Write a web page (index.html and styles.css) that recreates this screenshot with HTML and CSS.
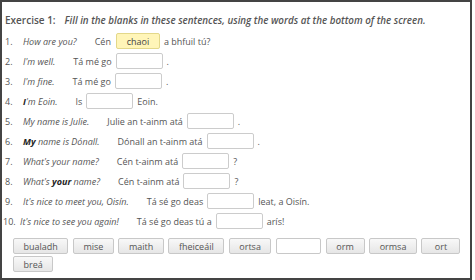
FILE: index.html
```html
<!DOCTYPE html>
<html>
<head>
<meta charset="utf-8">
<link rel="stylesheet" href="styles.css">
</head>
<body>
<div class="frame">
  <div class="title"><span class="label">Exercise 1:</span><span class="instr">Fill in the blanks in these sentences, using the words at the bottom of the screen.</span></div>
  <div class="rows">
    <div class="row"><span class="num">1.</span><span class="en">How are you?</span><span class="ga">Cén</span><span class="box filled">chaoi</span><span class="tail">a bhfuil tú?</span></div>
    <div class="row"><span class="num">2.</span><span class="en">I'm well.</span><span class="ga">Tá mé go</span><span class="box"></span><span class="tail">.</span></div>
    <div class="row"><span class="num">3.</span><span class="en">I'm fine.</span><span class="ga">Tá mé go</span><span class="box"></span><span class="tail">.</span></div>
    <div class="row"><span class="num">4.</span><span class="en"><b>I</b>'m Eoin.</span><span class="ga">Is</span><span class="box"></span><span class="tail">Eoin.</span></div>
    <div class="row"><span class="num">5.</span><span class="en">My name is Julie.</span><span class="ga">Julie an t-ainm atá</span><span class="box"></span><span class="tail">.</span></div>
    <div class="row"><span class="num">6.</span><span class="en"><b>My</b> name is Dónall.</span><span class="ga">Dónall an t-ainm atá</span><span class="box"></span><span class="tail">.</span></div>
    <div class="row"><span class="num">7.</span><span class="en">What's your name?</span><span class="ga">Cén t-ainm atá</span><span class="box"></span><span class="tail">?</span></div>
    <div class="row"><span class="num">8.</span><span class="en">What's <b>your</b> name?</span><span class="ga">Cén t-ainm atá</span><span class="box"></span><span class="tail">?</span></div>
    <div class="row"><span class="num">9.</span><span class="en">It's nice to meet you, Oisín.</span><span class="ga">Tá sé go deas</span><span class="box"></span><span class="tail">leat, a Oisín.</span></div>
    <div class="row row10"><span class="num">10.</span><span class="en">It's nice to see you again!</span><span class="ga">Tá sé go deas tú a</span><span class="box"></span><span class="tail">arís!</span></div>
  </div>
  <div class="bank">
    <span class="word">bualadh</span>
    <span class="word">mise</span>
    <span class="word">maith</span>
    <span class="word">fheiceáil</span>
    <span class="word">ortsa</span>
    <span class="slot"></span>
    <span class="word">orm</span>
    <span class="word">ormsa</span>
    <span class="word">ort</span>
    <span class="word">breá</span>
  </div>
</div>
</body>
</html>
```
FILE: styles.css
```css
html, body {
  margin: 0;
  padding: 0;
  background: #fff;
}
body {
  font-family: "Open Sans", "DejaVu Sans", sans-serif;
  color: #555;
}
.frame {
  box-sizing: border-box;
  width: 472px;
  height: 280px;
  border: 2px solid #444;
  padding: 10px 0 0 3px;
  display: flex;
  flex-direction: column;
}
.title {
  font-size: 9.8px;
  line-height: 16px;
  height: 16px;
  white-space: nowrap;
  color: #555;
}
.label {
  font-weight: 600;
  font-size: 10px;
  margin-right: 9px;
}
.instr {
  font-style: italic;
  font-weight: 600;
}
.rows {
  margin-top: 3px;
  display: flex;
  flex-direction: column;
}
.row {
  display: flex;
  align-items: center;
  height: 20px;
  font-size: 9px;
  white-space: nowrap;
}
.num {
  width: 18px;
  flex: none;
}
.row10 .num {
  width: 17px;
  margin-left: -2px;
}
.en {
  font-style: italic;
  margin-right: 18px;
}
.en b {
  font-weight: 700;
  color: #222;
}
.box {
  box-sizing: border-box;
  width: 47px;
  height: 16px;
  border: 1px solid #ccc;
  border-radius: 2px;
  background: #fff;
  margin: 0 4px 0 4px;
  display: flex;
  align-items: center;
  justify-content: center;
  color: #444;
}
.box.filled {
  background: #fff5b8;
  border-color: #e3d88a;
  width: 44px;
  margin-left: 5px;
}
.bank {
  margin-top: 7px;
  padding-left: 8px;
  display: flex;
  flex-wrap: wrap;
  gap: 2px 4.6px;
  font-size: 9px;
}
.word, .slot {
  box-sizing: border-box;
  height: 16px;
  min-width: 39px;
  border: 1px solid #c8c8c8;
  border-radius: 2px;
  display: flex;
  align-items: center;
  justify-content: center;
  padding: 0 9.5px;
  color: #555;
}
.word {
  background: linear-gradient(#f8f8f8, #e6e6e6);
}
.slot {
  width: 45px;
  background: #fff;
}
```
